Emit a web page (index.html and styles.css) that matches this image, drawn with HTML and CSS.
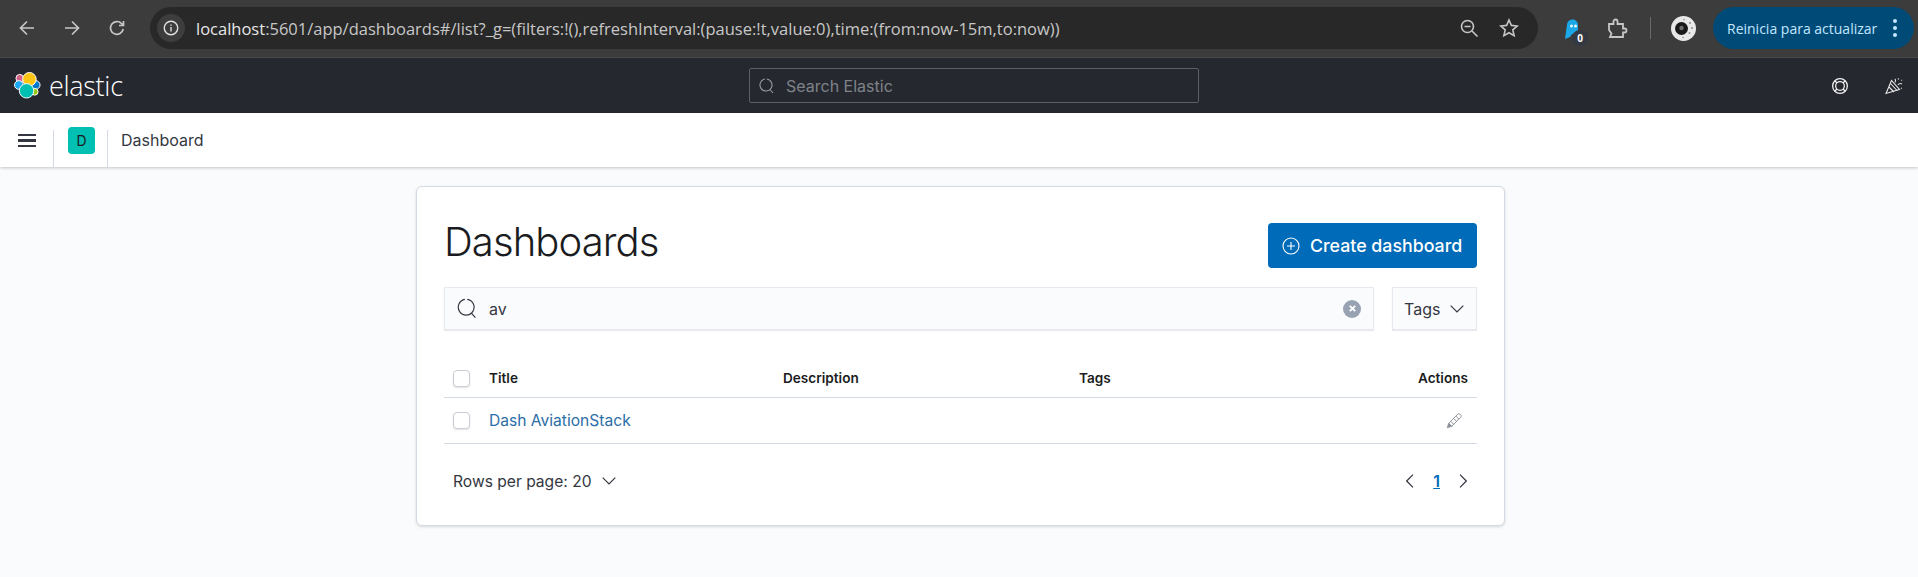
FILE: index.html
```html
<!DOCTYPE html>
<html lang="es">
<head>
    <meta charset="UTF-8">
    <meta name="viewport" content="width=device-width, initial-scale=1.0">
    <title>Dashboards - Elastic</title>
    <link rel="stylesheet" href="styles.css">
</head>
<body>
    <!-- Barra del navegador -->
    <div class="browser-bar">
        <div class="nav-buttons">
            <svg class="nav-icon" viewBox="0 0 20 20"><path d="M17 10H4M10 3.500 3.500 10l6.500 6.500"/></svg>
            <svg class="nav-icon" viewBox="0 0 20 20"><path d="M3 10h13M10 3.500l6.500 6.500-6.500 6.500"/></svg>
            <svg class="nav-icon" viewBox="0 0 20 20"><path d="M16.200 11a6.400 6.400 0 1 1-1.500-5.300L16.500 7.500M16.500 3v4.500H12"/></svg>
        </div>
        <div class="omnibox">
            <span class="info-chip">
                <svg class="info-icon" viewBox="0 0 20 20"><circle cx="10" cy="10" r="7.500"/><path d="M10 9v5M10 6v1.500"/></svg>
            </span>
            <span class="url"><b>localhost</b>:5601/app/dashboards#/list?_g=(filters:!(),refreshInterval:(pause:!t,value:0),time:(from:now-15m,to:now))</span>
            <svg class="omni-icon zoom-out" viewBox="0 0 20 20"><circle cx="8.500" cy="8.500" r="6"/><path d="M5.500 8.500h6M13 13l5.500 5.500"/></svg>
            <svg class="omni-icon star" viewBox="0 0 20 20"><path d="m10 2 2.400 5.400 5.800.6-4.400 3.900 1.300 5.700L10 14.700l-5.100 2.900 1.300-5.700L1.800 8l5.800-.6z"/></svg>
        </div>
        <div class="extensions">
            <span class="ghost-ext">
                <svg viewBox="0 -2 20 24"><path class="ghost" d="M3 21 5 6.500C5.500 3 8 1.500 10.500 1.500S16 3.500 16 7v9l-6 0-2 3z"/><circle class="ghost-eye" cx="9.500" cy="8" r="1.500"/><circle class="ghost-eye" cx="13.500" cy="8" r="1.500"/></svg>
                <span class="ext-badge">0</span>
            </span>
            <svg class="puzzle" viewBox="0 0 24 24"><path d="M4 8h4.500V5.500a2 2 0 0 1 4 0V8H18v4.500h1.500a2 2 0 0 1 0 4H18V21H5l1.500-3.500L4 14z"/></svg>
            <span class="bar-sep"></span>
            <svg class="avatar" viewBox="0 0 25 25">
                <circle cx="12.500" cy="12.500" r="12.500" fill="#e8e8e8"/>
                <circle cx="10.500" cy="12.500" r="6.500" fill="#191919"/>
                <circle cx="10.500" cy="12" r="2.200" fill="#6f6f6f"/>
                <circle cx="19" cy="7" r="1" fill="#8c8c8c"/>
                <circle cx="21" cy="12" r="1" fill="#8c8c8c"/>
                <circle cx="18.500" cy="17" r="1" fill="#8c8c8c"/>
                <circle cx="13" cy="3.500" r="0.800" fill="#8c8c8c"/>
                <circle cx="12" cy="21.500" r="0.800" fill="#8c8c8c"/>
            </svg>
        </div>
        <div class="update-pill">
            <span>Reinicia para actualizar</span>
            <span class="dots"><i></i><i></i><i></i></span>
        </div>
    </div>

    <!-- Cabecera de Elastic -->
    <header class="elastic-header">
        <div class="brand">
            <svg class="logo" viewBox="0 0 28 28">
                <g stroke="#fff" stroke-width="1">
                    <circle cx="6" cy="6.500" r="4" fill="#d36086"/>
                    <circle cx="5" cy="13.500" r="4.500" fill="#1ba9f5"/>
                    <circle cx="22.500" cy="13.500" r="4.500" fill="#0077cc"/>
                    <circle cx="21.500" cy="20.500" r="3.500" fill="#93c90e"/>
                    <circle cx="16" cy="7.500" r="7" fill="#fec514"/>
                    <circle cx="13" cy="19.500" r="7.500" fill="#00bfb3"/>
                </g>
            </svg>
            <span class="brand-name">elastic</span>
        </div>
        <div class="global-search">
            <svg class="search-icon" viewBox="0 0 16 16"><path d="M7.800 1.050A6 6 0 1 1 6 1.080M11 11.500l3 3.500"/></svg>
            <span>Search Elastic</span>
        </div>
        <div class="header-icons">
            <svg class="help-icon" viewBox="0 0 20 20"><circle cx="10" cy="10" r="8.200"/><circle cx="10" cy="10" r="4.800"/><path d="m4.200 4.200 2.400 2.400M15.800 4.200l-2.400 2.400M4.200 15.800l2.400-2.400M15.800 15.800l-2.400-2.400"/></svg>
            <svg class="party-icon" viewBox="0 0 20 20"><path d="M2 17.500 7.500 4.500l8 9z"/><path d="m5 11 5 5M6.500 7.500l6.500 7M11 3c1 1 .5 2.500 0 3.500M14 9c1-1.500 3-1.500 4-1M14 2.500l.8.800M17.500 4l.5.5M17 12l.8.500"/></svg>
        </div>
    </header>

    <!-- Barra de migas -->
    <nav class="crumb-bar">
        <span class="burger"><i></i><i></i><i></i></span>
        <span class="space-cell"><span class="space-badge">D</span></span>
        <span class="crumb">Dashboard</span>
    </nav>

    <main class="page">
        <section class="panel">
            <div class="panel-head">
                <h1>Dashboards</h1>
                <button class="create-btn" type="button">
                    <svg viewBox="0 0 18 18"><circle cx="9" cy="9" r="8"/><path d="M9 5v8M5 9h8"/></svg>
                    Create dashboard
                </button>
            </div>

            <div class="filters">
                <div class="search-box">
                    <svg class="search-icon big" viewBox="0 0 16 16"><path d="M7.800 1.050A6 6 0 1 1 6 1.080M11 11.500l3 3.500"/></svg>
                    <span class="search-value">av</span>
                    <span class="clear-btn">
                        <svg viewBox="0 0 10 10"><path d="m2 2 6 6M8 2 2 8"/></svg>
                    </span>
                </div>
                <div class="tags-filter">
                    <span>Tags</span>
                    <svg class="chevron" viewBox="0 0 14 8"><path d="m.7.700 6.300 6.300 6.300-6.300"/></svg>
                </div>
            </div>

            <div class="table-row table-head">
                <span class="check"></span>
                <span>Title</span>
                <span>Description</span>
                <span>Tags</span>
                <span class="cell-right">Actions</span>
            </div>
            <div class="table-row table-body">
                <span class="check"></span>
                <a class="dash-link" href="#">Dash AviationStack</a>
                <span></span>
                <span></span>
                <span class="cell-right">
                    <svg class="pencil" viewBox="0 0 18 18"><path class="pencil-tip" d="M1.500 16.500 2.800 12 6 15.200z"/><path d="M2.800 12 12.500 2.200a1.500 1.500 0 0 1 2.100 0l1.100 1.100a1.500 1.500 0 0 1 0 2.100L6 15.200zM5 9.800l3.200 3.200M8 6.800l3.200 3.200M10.500 4.300l3.200 3.200"/></svg>
                </span>
            </div>

            <div class="table-foot">
                <div class="rows-per-page">
                    <span>Rows per page: 20</span>
                    <svg class="chevron" viewBox="0 0 14 8"><path d="m.7.700 6.300 6.300 6.300-6.300"/></svg>
                </div>
                <div class="pager">
                    <svg class="arrow" viewBox="0 0 8 14"><path d="M7 .700.700 7 7 13.300"/></svg>
                    <a class="page-num" href="#">1</a>
                    <svg class="arrow" viewBox="0 0 8 14"><path d="M1 .700 7.300 7 1 13.300"/></svg>
                </div>
            </div>
        </section>
    </main>
</body>
</html>
```

FILE: styles.css
```css
* {
    box-sizing: border-box;
}
body {
    margin: 0;
    height: 577px;
    overflow: hidden;
    background: #fafbfd;
    font-family: 'Inter', 'Liberation Sans', sans-serif;
    color: #343741;
}

/* Barra del navegador */
.browser-bar {
    height: 58px;
    display: flex;
    align-items: center;
    padding: 0 4px 1px 0;
    background: #3c3c3c;
    border-bottom: 1px solid #4a4a4a;
}
.nav-buttons {
    width: 150px;
    flex: none;
    display: flex;
    gap: 25px;
    padding-left: 17px;
}
.nav-icon {
    width: 20px;
    height: 20px;
    fill: none;
    stroke: #c4c7c5;
    stroke-width: 1.700;
}
.omnibox {
    width: 1388px;
    height: 42px;
    flex: none;
    display: flex;
    align-items: center;
    padding: 0 19px 0 7px;
    border-radius: 21px;
    background: #282828;
}
.info-chip {
    width: 28px;
    height: 28px;
    flex: none;
    display: flex;
    align-items: center;
    justify-content: center;
    border-radius: 50%;
    background: #3d3d3d;
}
.info-icon {
    width: 18px;
    height: 18px;
    fill: none;
    stroke: #e3e3e3;
    stroke-width: 1.500;
}
.url {
    flex: 1;
    margin-left: 11px;
    font-family: 'Open Sans', sans-serif;
    font-size: 16.500px;
    white-space: nowrap;
    color: #c7c7c7;
}
.url b {
    font-weight: 400;
    color: #e6e6e6;
}
.omni-icon {
    width: 20px;
    height: 20px;
    fill: none;
    stroke: #c4c7c5;
    stroke-width: 1.600;
}
.star {
    margin-left: 20px;
}
.extensions {
    width: 175px;
    flex: none;
    display: flex;
    align-items: center;
}
.ghost-ext {
    position: relative;
    width: 20px;
    height: 24px;
    margin-left: 24px;
}
.ghost-ext svg {
    width: 20px;
    height: 24px;
}
.ghost {
    fill: #1ba8e8;
}
.ghost-eye {
    fill: #e8f6fc;
}
.ext-badge {
    position: absolute;
    left: 10px;
    top: 14px;
    width: 16px;
    height: 16px;
    border-radius: 50%;
    background: #343842;
    color: #fff;
    font: 700 10px/16px 'Open Sans', sans-serif;
    text-align: center;
}
.puzzle {
    width: 24px;
    height: 24px;
    margin-left: 23px;
    fill: none;
    stroke: #c4c7c5;
    stroke-width: 1.800;
}
.bar-sep {
    width: 1px;
    height: 22px;
    margin-left: 21px;
    background: #6a6a6a;
}
.avatar {
    width: 25px;
    height: 25px;
    margin-left: 20px;
}
.update-pill {
    width: 201px;
    height: 42px;
    flex: none;
    display: flex;
    align-items: center;
    justify-content: space-between;
    padding: 0 17px 0 14px;
    border-radius: 21px;
    background: #004a77;
    color: #c2e7ff;
    font-family: 'Open Sans', sans-serif;
    font-size: 14px;
    white-space: nowrap;
}
.dots {
    display: flex;
    flex-direction: column;
    gap: 3px;
}
.dots i {
    width: 4px;
    height: 4px;
    border-radius: 50%;
    background: #c2e7ff;
}

/* Cabecera de Elastic */
.elastic-header {
    height: 55px;
    display: flex;
    align-items: center;
    padding: 0 14px;
    background: #25282f;
}
.brand {
    width: 735px;
    flex: none;
    display: flex;
    align-items: center;
    gap: 8px;
}
.logo {
    width: 27px;
    height: 27px;
}
.brand-name {
    font-family: 'Open Sans', sans-serif;
    font-weight: 300;
    font-size: 27px;
    line-height: 32px;
    letter-spacing: -0.3px;
    color: #fff;
}
.global-search {
    width: 450px;
    height: 35px;
    display: flex;
    align-items: center;
    gap: 11px;
    padding-left: 9px;
    border: 1px solid #5c5f66;
    border-radius: 2px;
    color: #7f8389;
    font-size: 16px;
}
.search-icon {
    width: 16px;
    height: 16px;
    fill: none;
    stroke: #9a9ca1;
    stroke-width: 1.100;
}
.header-icons {
    margin-left: auto;
    display: flex;
    align-items: center;
    gap: 35px;
}
.help-icon {
    width: 18px;
    height: 18px;
    fill: none;
    stroke: #f0f0f0;
    stroke-width: 1.400;
}
.party-icon {
    width: 20px;
    height: 20px;
    fill: none;
    stroke: #e8e8e8;
    stroke-width: 1.100;
}

/* Barra de migas */
.crumb-bar {
    height: 54px;
    display: flex;
    align-items: flex-end;
    background: #fff;
    box-shadow: 0 1px 3px rgba(0, 0, 0, 0.22);
}
.burger {
    width: 54px;
    height: 37px;
    display: flex;
    flex-direction: column;
    gap: 3px;
    padding: 3.500px 0 0 18px;
    border-right: 1px solid #d3dae6;
}
.burger i {
    width: 18px;
    height: 2.500px;
    background: #343741;
}
.space-cell {
    width: 54px;
    height: 37px;
    border-right: 1px solid #d3dae6;
}
.space-badge {
    display: block;
    width: 27px;
    height: 27px;
    margin: -3px 0 0 14px;
    border-radius: 4px;
    background: #00bfb3;
    color: #1a1c21;
    font-size: 14px;
    line-height: 27px;
    text-align: center;
}
.crumb {
    align-self: center;
    margin-left: 13px;
    font-size: 16px;
    color: #343741;
}

/* Panel principal */
.page {
    padding-top: 19px;
}
.panel {
    width: 1089px;
    height: 340px;
    margin-left: 416px;
    padding: 0 27px;
    background: #fff;
    border: 1px solid #d3dae6;
    border-radius: 6px;
    box-shadow: 0 1px 3px rgba(0, 0, 0, 0.14);
}
.panel-head {
    height: 100px;
    display: flex;
    justify-content: space-between;
    padding-top: 36px;
}
.panel-head h1 {
    margin: -5px 0 0 0;
    font-size: 40px;
    font-weight: 300;
    letter-spacing: -0.9px;
    line-height: 48px;
    color: #1a1c21;
}
.create-btn {
    width: 209px;
    height: 45px;
    display: flex;
    align-items: center;
    gap: 10px;
    padding: 0 0 0 14px;
    border: 0;
    border-radius: 4px;
    background: #006bb8;
    color: #fff;
    font-family: inherit;
    font-size: 17.800px;
    font-weight: 500;
    white-space: nowrap;
}
.create-btn svg {
    width: 18px;
    height: 18px;
    fill: none;
    stroke: #fff;
    stroke-width: 1.100;
}
.filters {
    height: 43px;
    display: flex;
    gap: 18px;
}
.search-box {
    flex: 1;
    display: flex;
    align-items: center;
    padding: 0 12px;
    background: #fafbfd;
    border: 1px solid #e6e9ef;
    box-shadow: 0 1px 1px rgba(0, 0, 0, 0.08);
}
.search-icon.big {
    width: 21px;
    height: 21px;
    stroke: #343741;
    stroke-width: 0.900;
}
.search-value {
    flex: 1;
    margin-left: 11px;
    font-size: 16px;
}
.clear-btn {
    width: 18px;
    height: 18px;
    display: flex;
    align-items: center;
    justify-content: center;
    margin-right: 0;
    border-radius: 50%;
    background: #98a2b3;
}
.clear-btn svg {
    width: 9px;
    height: 9px;
    fill: none;
    stroke: #fff;
    stroke-width: 2;
}
.tags-filter {
    width: 85px;
    display: flex;
    align-items: center;
    justify-content: space-between;
    padding: 0 12px 0 11px;
    background: #fafbfd;
    border: 1px solid #e6e9ef;
    box-shadow: 0 1px 1px rgba(0, 0, 0, 0.08);
    font-size: 16px;
}
.chevron {
    width: 14px;
    height: 8px;
    fill: none;
    stroke: #343741;
    stroke-width: 1.200;
}

/* Tabla */
.table-row {
    display: grid;
    grid-template-columns: 36px 294px 296px 1fr 120px;
    align-items: center;
    padding: 0 9px;
    border-bottom: 1px solid #d3dae6;
}
.table-head {
    height: 68px;
    padding-top: 29px;
    font-size: 13.600px;
    font-weight: 600;
    color: #1a1c21;
}
.table-body {
    height: 46px;
}
.check {
    display: block;
    width: 17px;
    height: 17px;
    background: #fff;
    border: 1px solid #c9ced6;
    border-radius: 4px;
    box-shadow: 0 1px 2px rgba(0, 0, 0, 0.12);
}
.cell-right {
    display: flex;
    justify-content: flex-end;
}
.dash-link {
    font-size: 15.600px;
    white-space: nowrap;
    text-decoration: none;
    color: #2c6ea8;
}
.pencil {
    width: 17px;
    height: 17px;
    margin-right: 5px;
    fill: none;
    stroke: #8b8f96;
    stroke-width: 1;
}
.pencil-tip {
    fill: #8b8f96;
}
.table-foot {
    height: 75px;
    display: flex;
    align-items: center;
    justify-content: space-between;
    padding: 0 10px 1px 9px;
}
.rows-per-page {
    display: flex;
    align-items: center;
    gap: 10px;
    font-size: 15.600px;
}
.pager {
    display: flex;
    align-items: center;
    gap: 19px;
}
.arrow {
    width: 8px;
    height: 14px;
    fill: none;
    stroke: #343741;
    stroke-width: 1.200;
}
.page-num {
    font-size: 16px;
    font-weight: 600;
    color: #006bb8;
}
```
